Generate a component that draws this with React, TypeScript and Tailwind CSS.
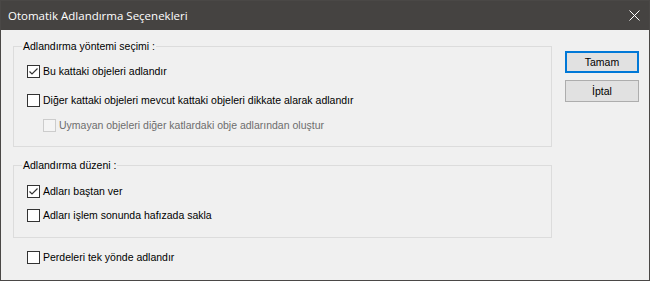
import React, { useState } from 'react';

type CheckProps = {
  label: string;
  checked: boolean;
  disabled?: boolean;
  onToggle?: () => void;
};

const CheckRow: React.FC<CheckProps> = ({ label, checked, disabled, onToggle }) => (
  <div className="flex items-center h-[13px]" onClick={disabled ? undefined : onToggle}>
    <div
      className={`w-[13px] h-[13px] flex items-center justify-center border ${
        disabled ? 'border-[#cccccc] bg-[#f4f4f4]' : 'border-[#333333] bg-white'
      }`}
    >
      {checked && (
        <svg width="11" height="11" viewBox="0 0 11 11">
          <path d="M1.5 5.5 L4 8 L9.5 2.5" fill="none" stroke="#333333" strokeWidth="1.2" />
        </svg>
      )}
    </div>
    <span className={`ml-[3px] whitespace-nowrap ${disabled ? 'text-[#6d6d6d]' : 'text-black'}`}>
      {label}
    </span>
  </div>
);

export default function App() {
  const [opts, setOpts] = useState({
    thisFloor: true,
    otherFloors: false,
    mismatched: false,
    fromStart: true,
    remember: false,
    walls: false,
  });

  const toggle = (k: keyof typeof opts) => setOpts({ ...opts, [k]: !opts[k] });

  return (
    <div
      className="w-[650px] h-[281px] flex flex-col bg-[#f0f0f0] border border-[#4a4846] text-[10.5px] leading-[13px] overflow-hidden"
      style={{ fontFamily: '"Liberation Sans", Arial, sans-serif' }}
    >
      {/* Title bar */}
      <div className="h-[29px] flex items-center justify-between bg-[#454341] text-white pl-[7px] pr-[9px] shrink-0">
        <span className="text-[11.5px]" style={{ fontFamily: '"Open Sans", "Noto Sans", sans-serif' }}>
          Otomatik Adlandırma Seçenekleri
        </span>
        <svg width="11" height="11" viewBox="0 0 11 11">
          <path d="M0.5 0.5 L10.5 10.5 M10.5 0.5 L0.5 10.5" stroke="white" strokeWidth="1" />
        </svg>
      </div>

      {/* Body */}
      <div className="flex flex-1">
        <div className="w-[539px] ml-[12px] mt-[10px] flex flex-col">
          <fieldset className="border border-[#dcdcdc] px-[8px] pb-[14px]">
            <legend className="px-[1px]">Adlandırma yöntemi seçimi :</legend>
            <div className="ml-[5px] mt-[12px]">
              <CheckRow label="Bu kattaki objeleri adlandır" checked={opts.thisFloor} onToggle={() => toggle('thisFloor')} />
            </div>
            <div className="ml-[5px] mt-[16px]">
              <CheckRow
                label="Diğer kattaki objeleri mevcut kattaki objeleri dikkate alarak adlandır"
                checked={opts.otherFloors}
                onToggle={() => toggle('otherFloors')}
              />
            </div>
            <div className="ml-[21px] mt-[12px]">
              <CheckRow
                label="Uymayan objeleri diğer katlardaki obje adlarından oluştur"
                checked={opts.mismatched}
                disabled
              />
            </div>
          </fieldset>

          <fieldset className="border border-[#dcdcdc] px-[8px] pb-[15px] mt-[12px]">
            <legend className="px-[1px]">Adlandırma düzeni :</legend>
            <div className="ml-[5px] mt-[13px]">
              <CheckRow label="Adları baştan ver" checked={opts.fromStart} onToggle={() => toggle('fromStart')} />
            </div>
            <div className="ml-[5px] mt-[11px]">
              <CheckRow label="Adları işlem sonunda hafızada sakla" checked={opts.remember} onToggle={() => toggle('remember')} />
            </div>
          </fieldset>

          <div className="ml-[14px] mt-[13px]">
            <CheckRow label="Perdeleri tek yönde adlandır" checked={opts.walls} onToggle={() => toggle('walls')} />
          </div>
        </div>

        <div className="ml-[13px] mt-[21px] flex flex-col gap-[7px]">
          <button className="w-[74px] h-[22px] bg-[#e1e1e1] border-2 border-[#0078d7] text-black">Tamam</button>
          <button className="w-[74px] h-[22px] bg-[#e1e1e1] border border-[#adadad] text-black">İptal</button>
        </div>
      </div>
    </div>
  );
}
